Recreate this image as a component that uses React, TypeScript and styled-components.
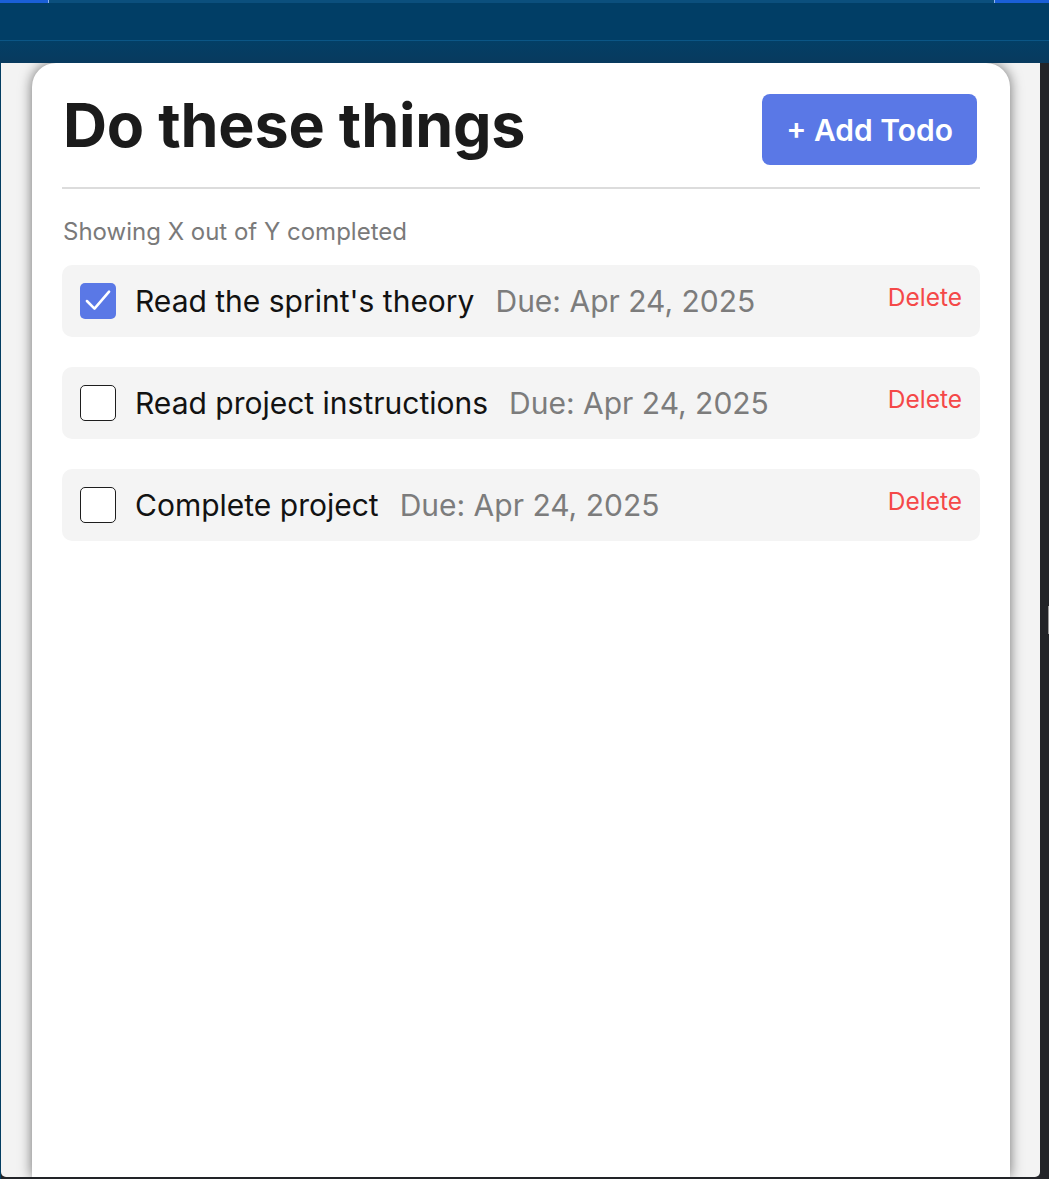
import React, { useState } from "react";
import styled, { createGlobalStyle } from "styled-components";

const GlobalStyle = createGlobalStyle`
    * { box-sizing: border-box; }
    html, body { margin: 0; padding: 0; }
    body {
        font-family: Inter, "Noto Sans", "Liberation Sans", sans-serif;
        background: #222428;
    }
`

const Page = styled.div`
    height: 1179px;
    display: flex;
    flex-direction: column;
    overflow: hidden;
`

const TopBar = styled.div`
    position: relative;
    z-index: 1;
    height: 63px;
    flex-shrink: 0;
    display: flex;
    flex-direction: column;
    background: #023d63;
`

const TabStrip = styled.div`
    height: 3px;
    display: flex;
    background: #0b4f7d;
`

const TabMark = styled.div<{ width: string }>`
    width: ${({ width }) => width};
    background: #1a5fd8;
    border-right: 1px solid #8fb5f0;
`

const TabMarkRight = styled(TabMark)`
    margin-left: auto;
    border-right: none;
    border-left: 1px solid #8fb5f0;
`

const BarUpper = styled.div`
    height: 38px;
    background: #013e66;
    border-bottom: 1px solid #0b5686;
`

const BarLower = styled.div`
    flex: 1;
    background: linear-gradient(#033f66, #083a5e);
`

const Body = styled.div`
    flex: 1;
    display: flex;
    background: #222428;
`

const LeftEdge = styled.div`
    width: 1px;
    background: #033d62;
`

const Panel = styled.div`
    width: 1039px;
    margin-bottom: 2px;
    padding: 0 30px 0 31px;
    display: flex;
    background: #f3f3f3;
    border-radius: 0 0 5px 5px;
    overflow: hidden;
`

const Gutter = styled.div`
    flex: 1;
    display: flex;
    justify-content: flex-end;
`

const GutterMark = styled.div`
    width: 1px;
    height: 28px;
    margin-top: 543px;
    background: #9a9a9a;
`

const Card = styled.div`
    flex: 1;
    background: #ffffff;
    border-radius: 24px 24px 0 0;
    box-shadow: 0 0 13px rgba(0, 0, 0, 0.55);
    padding: 29px 30px 0 30px;
`

const Header = styled.div`
    display: flex;
    align-items: flex-start;
    justify-content: space-between;
    padding-bottom: 22px;
    border-bottom: 2px solid #dcdcdc;
`

const Title = styled.h1`
    margin: 0 0 0 1px;
    font-size: 61px;
    line-height: 1.1;
    font-weight: 700;
    color: #1b1b1b;
    letter-spacing: -0.2px;
`

const AddButton = styled.button`
    margin: 2px 3px 0 0;
    height: 71px;
    padding: 0 24px;
    border: none;
    border-radius: 8px;
    background: #5a78e6;
    color: #ffffff;
    font-family: inherit;
    font-size: 30px;
    font-weight: 600;
    cursor: pointer;
`

const Summary = styled.p`
    margin: 29px 0 18px 1px;
    font-size: 24px;
    line-height: 1.2;
    color: #7a7a7a;
`

const List = styled.ul`
    list-style: none;
    margin: 0;
    padding: 0;
    display: flex;
    flex-direction: column;
    gap: 30px;
`

const Row = styled.li`
    height: 72px;
    display: flex;
    align-items: center;
    padding: 0 18px;
    background: #f4f4f4;
    border-radius: 10px;
`

const Box = styled.span<{ checked: boolean }>`
    width: 36px;
    height: 36px;
    flex-shrink: 0;
    display: flex;
    align-items: center;
    justify-content: center;
    border-radius: 5px;
    background: ${({ checked }) => (checked ? "#5a78e6" : "#ffffff")};
    border: ${({ checked }) => (checked ? "none" : "1.5px solid #1e1e1e")};
    cursor: pointer;
`

const Name = styled.span`
    margin-left: 19px;
    font-size: 30px;
    color: #121212;
`

const Due = styled.span`
    margin-left: 21px;
    font-size: 30px;
    color: #7c7c7c;
`

const DeleteButton = styled.button`
    margin: 0 0 8px auto;
    padding: 0;
    border: none;
    background: none;
    font-family: inherit;
    font-size: 24.5px;
    color: #f44848;
    cursor: pointer;
`

const todos = [
    { id: 1, name: "Read the sprint's theory", due: "Apr 24, 2025", done: true },
    { id: 2, name: "Read project instructions", due: "Apr 24, 2025", done: false },
    { id: 3, name: "Complete project", due: "Apr 24, 2025", done: false },
]

const Check = () => (
    <svg width="28" height="28" viewBox="0 0 24 24" fill="none">
        <path d="M2.5 12 L9 18.5 L21.5 4" stroke="#ffffff" strokeWidth="2.2" strokeLinecap="round" strokeLinejoin="round" />
    </svg>
)

const App = () => {
    const [items, setItems] = useState(todos)

    const toggle = (id: number) =>
        setItems(items.map(t => (t.id === id ? { ...t, done: !t.done } : t)))

    return (
        <Page>
            <GlobalStyle />
            <TopBar>
                <TabStrip>
                    <TabMark width="49px" />
                    <TabMarkRight width="55px" />
                </TabStrip>
                <BarUpper />
                <BarLower />
            </TopBar>
            <Body>
                <LeftEdge />
                <Panel>
                    <Card>
                        <Header>
                            <Title>Do these things</Title>
                            <AddButton>+ Add Todo</AddButton>
                        </Header>
                        <Summary>Showing X out of Y completed</Summary>
                        <List>
                            {items.map(t => (
                                <Row key={t.id}>
                                    <Box checked={t.done} onClick={() => toggle(t.id)}>
                                        {t.done && <Check />}
                                    </Box>
                                    <Name>{t.name}</Name>
                                    <Due>Due: {t.due}</Due>
                                    <DeleteButton>Delete</DeleteButton>
                                </Row>
                            ))}
                        </List>
                    </Card>
                </Panel>
                <Gutter>
                    <GutterMark />
                </Gutter>
            </Body>
        </Page>
    )
}

export default App;
